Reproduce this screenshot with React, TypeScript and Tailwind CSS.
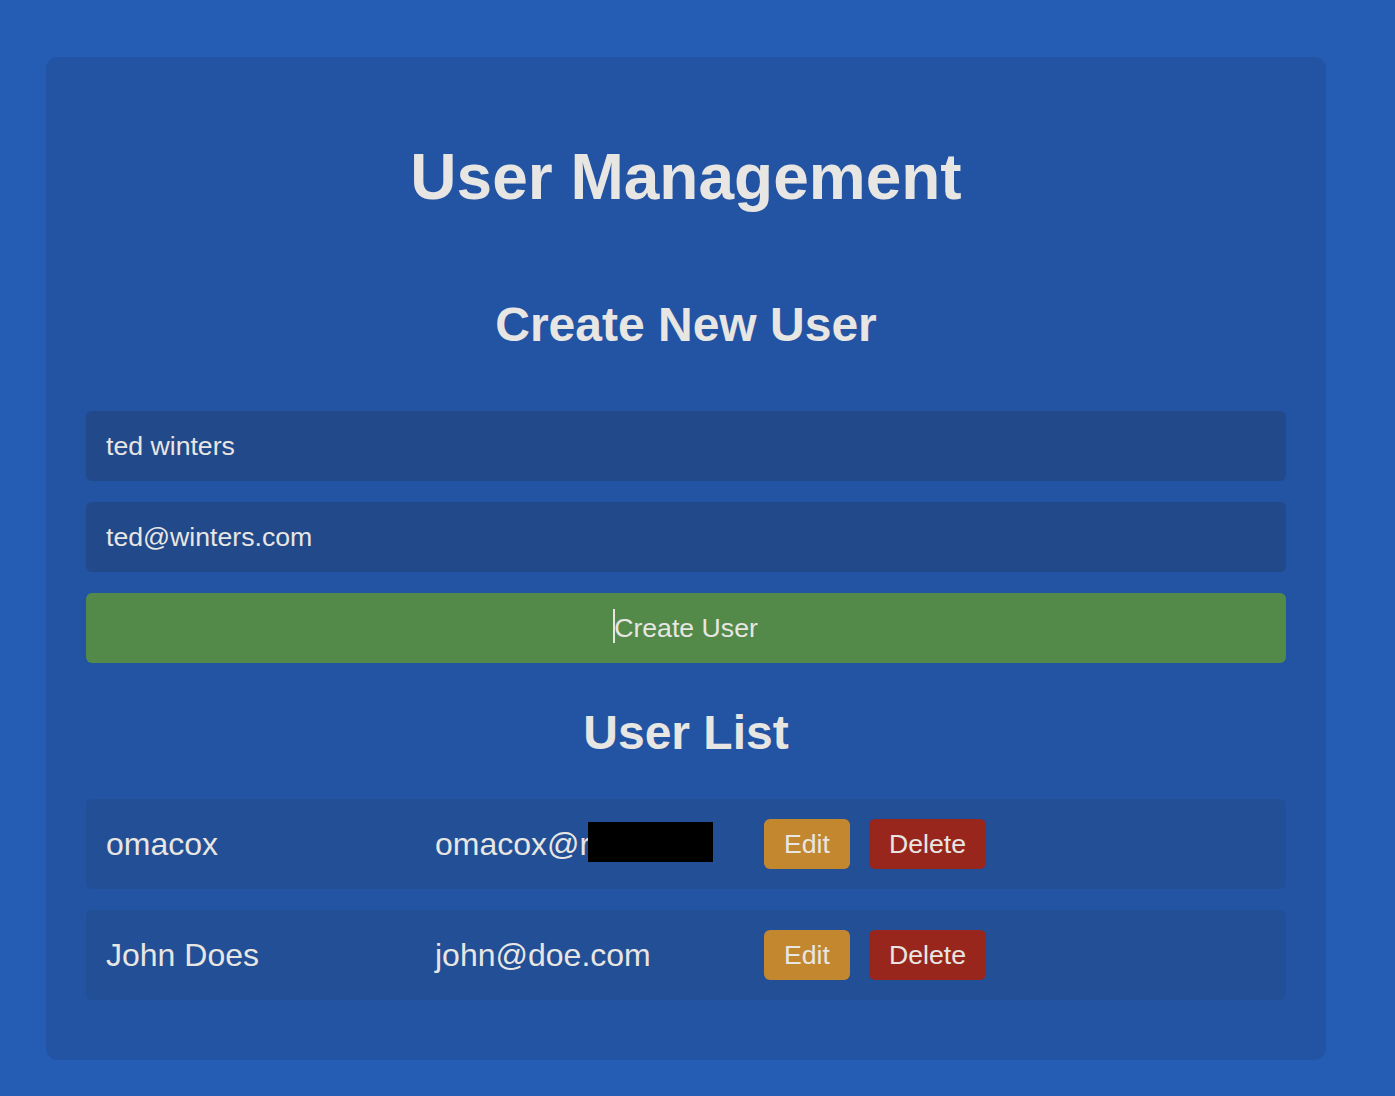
import React, { useState } from 'react'

interface User {
  name: string
  email: string
  redacted?: boolean
}

const initialUsers: User[] = [
  { name: 'omacox', email: 'omacox@r', redacted: true },
  { name: 'John Does', email: 'john@doe.com' },
]

export default function App() {
  const [name, setName] = useState('ted winters')
  const [email, setEmail] = useState('ted@winters.com')
  const [users] = useState<User[]>(initialUsers)

  return (
    <div className="min-h-[1096px] w-full bg-[#255cb4] pt-[57px] pb-9 pl-[46px] pr-[69px] font-['Liberation_Sans',Arial,sans-serif] text-[#e8e6e3]">
      <div className="w-[1280px] rounded-xl bg-[#2353a3] px-10 pb-[60px]">
        <h1 className="pt-[88px] text-center text-[64px] font-bold leading-none">User Management</h1>

        <h2 className="mt-[92px] text-center text-[48px] font-bold leading-none">Create New User</h2>

        {/* Form */}
        <div className="mt-[62px] flex flex-col gap-[21px]">
          <input
            value={name}
            onChange={e => setName(e.target.value)}
            className="h-[70px] w-full rounded-md bg-[#22498a] px-5 text-[26.67px] text-[#e8e6e3] outline-none"
          />
          <input
            value={email}
            onChange={e => setEmail(e.target.value)}
            className="h-[70px] w-full rounded-md bg-[#22498a] px-5 text-[26.67px] text-[#e8e6e3] outline-none"
          />
          <button className="h-[70px] w-full rounded-md bg-[#538a4a] text-[26.67px] text-[#e8e6e3]">
            <span className="relative">
              <span className="absolute -left-[1px] top-[-4px] h-[34px] w-[2px] bg-[#e8e6e3]"></span>
              Create User
            </span>
          </button>
        </div>

        <h2 className="mt-[46px] text-center text-[48px] font-bold leading-none">User List</h2>

        {/* User rows */}
        <div className="mt-[42px] flex flex-col gap-[21px]">
          {users.map(u => (
            <div key={u.name} className="flex h-[90px] items-center rounded-md bg-[#224f96] pl-5">
              <span className="w-[329px] text-[32px]">{u.name}</span>
              <span className="flex w-[329px] items-center text-[32px]">
                {u.email}
                {u.redacted && <span className="ml-[-2px] mt-[-4px] inline-block h-[40px] w-[125px] bg-black"></span>}
              </span>
              <div className="flex gap-[19px]">
                <button className="h-[50px] rounded-md bg-[#c2872f] px-5 text-[26.67px] text-[#e8e6e3]">Edit</button>
                <button className="h-[50px] rounded-md bg-[#98261c] px-5 text-[26.67px] text-[#e8e6e3]">Delete</button>
              </div>
            </div>
          ))}
        </div>
      </div>
    </div>
  )
}
